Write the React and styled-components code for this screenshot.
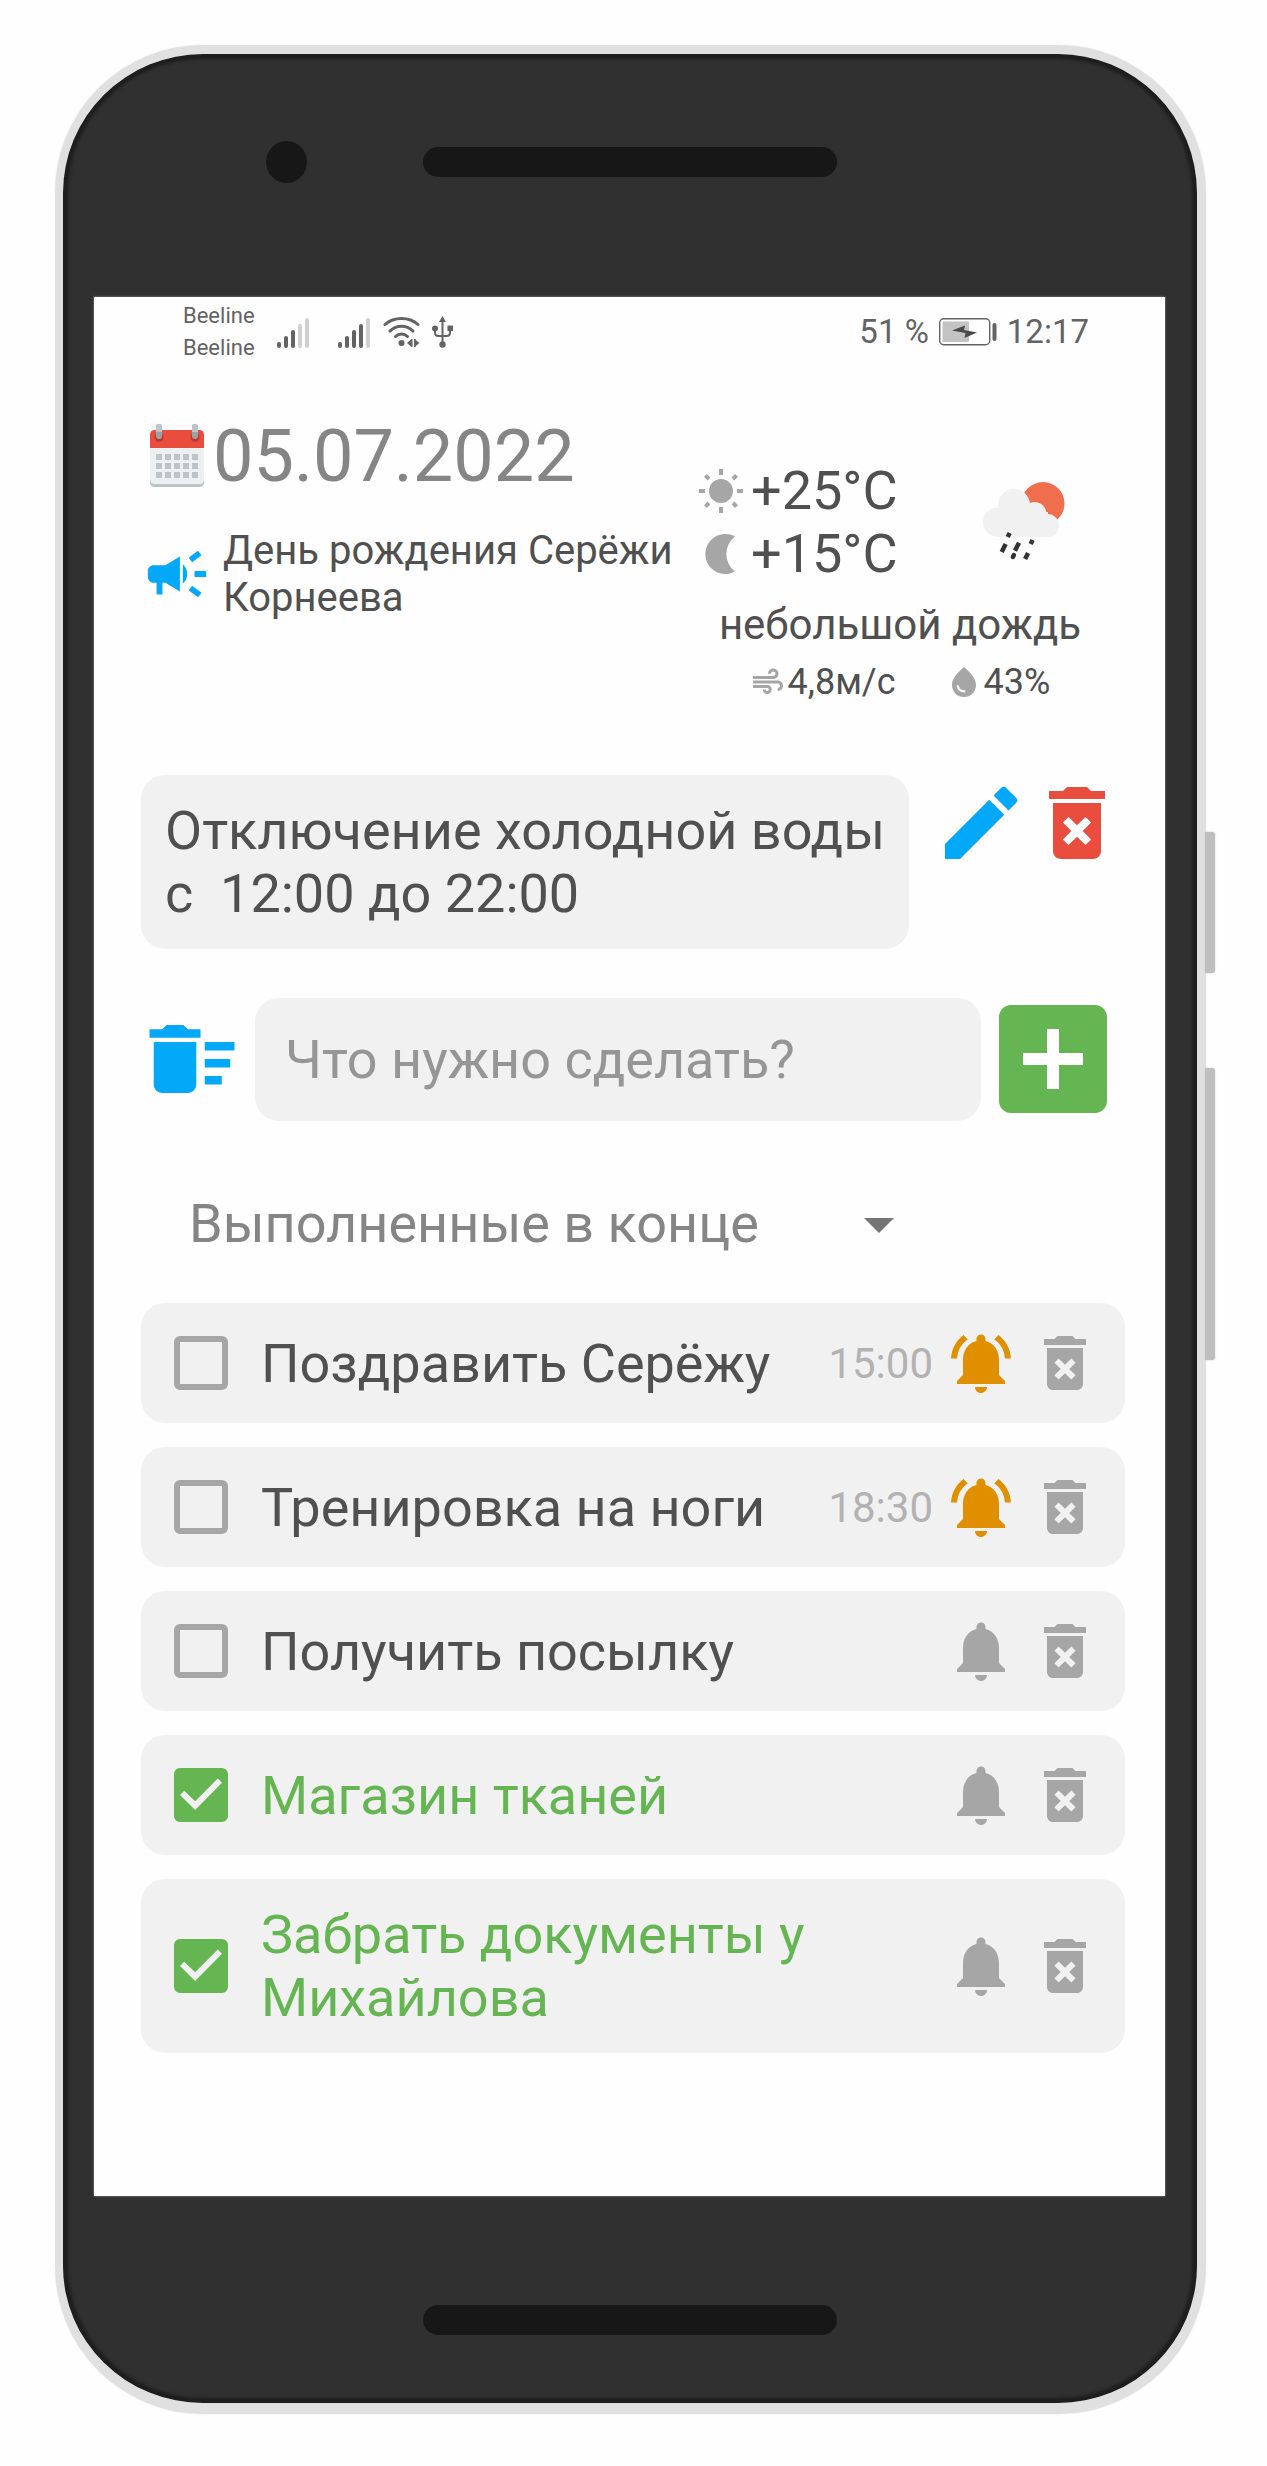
import React, { useState } from "react";
import styled, { createGlobalStyle } from "styled-components";
import {
  MdAddBox,
  MdAir,
  MdArrowDropDown,
  MdCampaign,
  MdDeleteForever,
  MdDeleteSweep,
  MdEdit,
  MdNotifications,
  MdNotificationsActive,
  MdWaterDrop,
} from "react-icons/md";

const color = {
  text: "#505050",
  muted: "#858585",
  hint: "#969696",
  time: "#b2b2b2",
  icon: "#a6a6a6",
  status: "#636363",
  card: "#f1f1f1",
  blue: "#03a9f8",
  red: "#e94d3d",
  green: "#66b553",
  amber: "#e08f00",
};

const GlobalStyle = createGlobalStyle`
  *, *::before, *::after { box-sizing: border-box; }
  body {
    margin: 0;
    background: #fefefe;
    color: ${color.text};
    font-family: Roboto, "Noto Sans", sans-serif;
  }
  button, input, select { font: inherit; color: inherit; }
  svg { display: block; flex: none; }
`;

/* ---------- device frame ---------- */

const Page = styled.div`
  padding: 45px 61px 51px 55px;
`;

const Phone = styled.div`
  position: relative;
  border: solid #e0e0e0;
  border-width: 9px 9px 11px 8px;
  border-radius: 148px;
  background: #303030;
  box-shadow: inset 0 0 3px 5px #1e1e1e, inset 0 0 2px 1px #1e1e1e, 0 0 2px #e8e8e8;
`;

const SideKey = styled.span`
  position: absolute;
  left: calc(100% + 8px);
  top: ${(p) => p.$top}px;
  width: 10px;
  height: ${(p) => p.$height}px;
  border-radius: 0 3px 3px 0;
  background: #bebebe;
  box-shadow: 0 0 2px #cfcfcf;
`;

const Bezel = styled.div`
  display: grid;
  grid-template-columns: 1fr 414px 1fr;
  align-items: center;
  padding: ${(p) => p.$padding};
`;

const Camera = styled.span`
  justify-self: end;
  width: 41px;
  height: 42px;
  margin-right: 116px;
  border-radius: 50%;
  background: #171717;
`;

const Speaker = styled.span`
  grid-column: 2;
  height: 30px;
  border-radius: 15px;
  background: #171717;
`;

const Screen = styled.div`
  margin: 0 32px 0 31px;
  background: #fefefe;
  box-shadow: 0 0 2px #9a9a9a;
`;

/* ---------- status bar ---------- */

const StatusBar = styled.div`
  display: flex;
  align-items: center;
  justify-content: space-between;
  padding: 3px 76px 0 89px;
  color: ${color.status};
`;

const StatusGroup = styled.div`
  display: flex;
  align-items: center;
  gap: ${(p) => p.$gap}px;
`;

const Carriers = styled.div`
  margin-right: 10px;
  font-size: 22px;
  line-height: 32px;
`;

const Signals = styled.div`
  display: flex;
  gap: 28px;
`;

const StatusText = styled.span`
  font-size: 33px;
  line-height: 42px;
`;

/* ---------- content ---------- */

const Content = styled.main`
  padding: 51px 40px 143px 47px;
`;

const Header = styled.header`
  display: flex;
  justify-content: space-between;
  padding-right: 18px;
  margin-bottom: 72px;
`;

const Today = styled.section`
  flex: 1;
  display: flex;
  flex-direction: column;
  gap: 28px;
`;

const TodayRow = styled.div`
  display: flex;
  align-items: center;
  gap: ${(p) => p.$gap}px;
`;

const IconSlot = styled.span`
  flex: none;
  display: flex;
  justify-content: center;
  width: 72px;
`;

const DateText = styled.h1`
  margin: 0;
  color: ${color.muted};
  font-size: 72px;
  font-weight: 400;
  line-height: 84px;
`;

const EventText = styled.p`
  margin: 0;
  font-size: 40px;
  line-height: 47px;
`;

const Weather = styled.section`
  flex: none;
  width: 414px;
  padding-top: 44px;
`;

const WeatherMain = styled.div`
  display: flex;
  align-items: center;
  justify-content: space-between;
  padding-right: 42px;
`;

const Temperature = styled.div`
  display: flex;
  align-items: center;
  gap: 2px;
  font-size: 54px;
  line-height: 63px;
`;

const Description = styled.p`
  margin: 15px 0 12px;
  text-align: center;
  font-size: 42px;
  line-height: 49px;
`;

const Readings = styled.div`
  display: flex;
  justify-content: center;
  gap: 50px;
`;

const Reading = styled.span`
  display: flex;
  align-items: center;
  gap: 2px;
  font-size: 36px;
  line-height: 42px;

  svg { color: ${color.icon}; }
`;

const NoteRow = styled.section`
  display: flex;
  align-items: flex-start;
  gap: 24px;
  margin-bottom: 38px;
`;

const Note = styled.p`
  flex: 1;
  margin: 0;
  padding: 24px 12px 24px 24px;
  border-radius: 24px;
  background: ${color.card};
  font-size: 54px;
  line-height: 63px;
  white-space: pre-wrap;
`;

const Actions = styled.div`
  flex: none;
  display: flex;
  gap: ${(p) => p.$gap || 0}px;
`;

const IconButton = styled.button`
  flex: none;
  padding: 0;
  border: 0;
  background: none;
  color: ${(p) => p.$color};
  cursor: pointer;
`;

const AddForm = styled.form`
  display: flex;
  align-items: center;
  margin-bottom: 60px;
`;

const TaskInput = styled.input`
  flex: 1;
  min-width: 0;
  height: 123px;
  margin-left: 12px;
  padding: 0 30px;
  border: 0;
  border-radius: 24px;
  background: ${color.card};
  font-size: 54px;
  line-height: 63px;

  &::placeholder { color: ${color.hint}; opacity: 1; }
`;

const SortField = styled.div`
  position: relative;
  max-width: 774px;
  margin-bottom: 48px;
  color: ${color.muted};

  svg {
    position: absolute;
    top: -3px;
    right: 0;
    color: #757575;
    pointer-events: none;
  }
`;

const SortSelect = styled.select`
  display: block;
  width: 100%;
  height: 64px;
  padding: 0 72px 0 48px;
  border: 0;
  appearance: none;
  background: transparent;
  font-size: 54px;
  line-height: 63px;
`;

const TaskList = styled.ul`
  display: flex;
  flex-direction: column;
  gap: 24px;
  margin: 0;
  padding: 0;
  list-style: none;
`;

const TaskItem = styled.li`
  display: flex;
  align-items: center;
  gap: 12px;
  min-height: 120px;
  padding: 24px;
  border-radius: 24px;
  background: ${color.card};
`;

const TaskLabel = styled.label`
  flex: 1;
  display: flex;
  align-items: center;
  gap: 33px;
  padding-left: 9px;
  color: ${(p) => (p.$done ? color.green : color.text)};
  font-size: 54px;
  line-height: 63px;
`;

const Checkbox = styled.input`
  flex: none;
  width: 54px;
  height: 54px;
  margin: 0;
  border: 6px solid ${color.icon};
  border-radius: 6px;
  appearance: none;

  &:checked {
    border-color: ${color.green};
    background: ${color.green};
  }

  &:checked::before {
    content: "";
    display: block;
    width: 42px;
    height: 42px;
    background: ${color.card};
    clip-path: polygon(0 50%, 10% 40%, 36% 65%, 90% 11%, 100% 21%, 36% 86%);
  }
`;

const TaskTime = styled.time`
  color: ${color.time};
  font-size: 42px;
  line-height: 49px;
`;

/* ---------- drawings ---------- */

function SignalIcon({ level }) {
  const bars = [6, 12, 18, 24, 30];
  return (
    <svg width="33" height="31" viewBox="0 0 33 31" aria-hidden="true">
      {bars.map((h, i) => (
        <rect
          key={h}
          x={i * 7}
          y={31 - h}
          width="4"
          height={h}
          rx="2"
          fill={i < level ? color.status : "#d0d0d0"}
        />
      ))}
    </svg>
  );
}

function WifiIcon() {
  return (
    <svg width="37" height="32" viewBox="0 0 37 32" fill="none" stroke={color.status} strokeWidth="3" strokeLinecap="round" aria-hidden="true">
      <path d="M2 8.5C11 0.5 26 0.5 35 8.5" />
      <path d="M7 15C13.5 8.5 23.5 8.5 30 15" />
      <path d="M12.5 20.5C16 17 21 17 24.5 20.5" />
      <circle cx="18.5" cy="27" r="3" fill={color.status} stroke="none" />
      <path d="M24 27l4.500-4v8zM36.500 27l-5-4v8z" fill={color.status} stroke="none" />
      <path d="M28.800 23v8M31.800 23v8" strokeWidth="1.500" strokeLinecap="butt" />
    </svg>
  );
}

function UsbIcon() {
  return (
    <svg width="21" height="32" viewBox="0 0 21 32" fill={color.status} aria-hidden="true">
      <path d="M10.500 0L14 6H7z" />
      <circle cx="10.500" cy="28.500" r="3.200" />
      <circle cx="3" cy="12.500" r="3" />
      <rect x="15.500" y="9.500" width="5.500" height="5.500" />
      <path d="M10.500 4V27M3 12V16.500Q3 20 6.500 20H14.500Q18 20 18 16.500V13" fill="none" stroke={color.status} strokeWidth="2" />
    </svg>
  );
}

function BatteryIcon() {
  return (
    <svg width="58" height="28" viewBox="0 0 58 28" aria-hidden="true">
      <rect x="0.700" y="0.700" width="50" height="26" rx="4" fill="none" stroke={color.status} strokeWidth="1.400" />
      <rect x="3.500" y="3.500" width="26.500" height="20.500" rx="1" fill="#c3c3c3" />
      <path d="M13 12.500L26 7.500L25 12L38 14.500L25.500 20L26.500 15z" fill="#4a4a4a" />
      <rect x="53.500" y="5" width="4" height="18" rx="2" fill={color.status} />
    </svg>
  );
}

function CalendarIcon() {
  const columns = [6, 15, 24, 33, 42];
  const rows = [30, 39, 48];
  return (
    <svg width="54" height="66" viewBox="0 0 54 66" aria-hidden="true">
      <path d="M0 24H54V58Q54 63 49 63H5Q0 63 0 58z" fill="#bdc3c7" />
      <path d="M0 24H54V55Q54 60 49 60H5Q0 60 0 55z" fill="#ecf0f1" />
      <path d="M5 6H49Q54 6 54 11V24H0V11Q0 6 5 6z" fill={color.red} />
      {[9, 45].map((x) => (
        <g key={x}>
          <circle cx={x} cy="13.500" r="4.500" fill="#c0392b" />
          <rect x={x - 3} y="0" width="6" height="15" rx="3" fill="#95a5a5" />
          <path d={`M${x - 3} 8V3a3 3 0 0 1 6 0V8z`} fill="#bdc3c7" />
        </g>
      ))}
      {rows.map((y) =>
        columns.map((x) => <rect key={`${x}-${y}`} x={x} y={y} width="6" height="6" fill="#bdc3c7" />)
      )}
    </svg>
  );
}

function SunIcon() {
  return (
    <svg width="56" height="44" viewBox="-28 -22 56 44" fill={color.icon} aria-hidden="true">
      <circle r="12" />
      {[0, 90, 180, 270].map((a) => (
        <rect key={a} x="-2" y="-22" width="4" height="6" transform={`rotate(${a})`} />
      ))}
      {[45, 135, 225, 315].map((a) => (
        <rect key={a} x="-2" y="-22" width="4" height="5" transform={`rotate(${a})`} />
      ))}
    </svg>
  );
}

function MoonIcon() {
  return (
    <svg width="56" height="40" viewBox="0 0 56 40" fill={color.icon} aria-hidden="true">
      <path d="M42 2.500A20 20 0 1 0 42 37.500A22 22 0 0 1 42 2.500z" />
    </svg>
  );
}

function RainIcon() {
  const drops = [
    [25.7, 53, 2],
    [20.7, 66, 4],
    [34, 64.7, 4],
    [48.6, 60, 2],
    [30.4, 74, 1],
    [43.6, 74, 3],
  ];
  return (
    <svg width="82" height="80" viewBox="0 0 82 80" aria-label="дождь" role="img">
      <circle cx="60" cy="21.500" r="21.500" fill="#ef6e4d" />
      <g fill="#f1f1f1">
        <circle cx="14.500" cy="40" r="14.500" />
        <circle cx="31" cy="23" r="16" />
        <circle cx="51.500" cy="32" r="12" />
        <circle cx="64.500" cy="43.500" r="11.500" />
        <rect x="14" y="30" width="51" height="25" />
      </g>
      <g stroke="#333" strokeWidth="4.500">
        {drops.map(([x, y, l]) => (
          <line key={`${x}`} x1={x - l / 2} y1={y + l} x2={x + l / 2} y2={y - l} strokeLinecap={l === 1 ? "round" : "butt"} />
        ))}
      </g>
    </svg>
  );
}

/* ---------- app ---------- */

const initialTasks = [
  { id: 1, title: "Поздравить Серёжу", time: "15:00", done: false },
  { id: 2, title: "Тренировка на ноги", time: "18:30", done: false },
  { id: 3, title: "Получить посылку", done: false },
  { id: 4, title: "Магазин тканей", done: true },
  { id: 5, title: "Забрать документы у Михайлова", done: true },
];

function Task({ task, onToggle, onDelete }) {
  const Bell = task.time ? MdNotificationsActive : MdNotifications;
  return (
    <TaskItem>
      <TaskLabel $done={task.done}>
        <Checkbox type="checkbox" checked={task.done} onChange={onToggle} />
        <span>{task.title}</span>
      </TaskLabel>
      {task.time && <TaskTime>{task.time}</TaskTime>}
      <Actions $gap={12}>
        <IconButton type="button" aria-label="Напоминание" $color={task.time ? color.amber : color.icon}>
          <Bell size={72} />
        </IconButton>
        <IconButton type="button" aria-label="Удалить" $color={color.icon} onClick={onDelete}>
          <MdDeleteForever size={72} />
        </IconButton>
      </Actions>
    </TaskItem>
  );
}

export default function App() {
  const [tasks, setTasks] = useState(initialTasks);
  const [draft, setDraft] = useState("");

  const toggle = (id) => setTasks(tasks.map((t) => (t.id === id ? { ...t, done: !t.done } : t)));
  const remove = (id) => setTasks(tasks.filter((t) => t.id !== id));
  const add = (e) => {
    e.preventDefault();
    if (!draft.trim()) return;
    setTasks([{ id: Date.now(), title: draft.trim(), done: false }, ...tasks]);
    setDraft("");
  };

  return (
    <Page>
      <GlobalStyle />
      <Phone>
        <SideKey $top={778} $height={141} />
        <SideKey $top={1014} $height={292} />
        <Bezel $padding="87px 0 114px">
          <Camera />
          <Speaker />
        </Bezel>
        <Screen>
          <StatusBar>
            <StatusGroup $gap={12}>
              <Carriers>
                <div>Beeline</div>
                <div>Beeline</div>
              </Carriers>
              <Signals>
                <SignalIcon level={3} />
                <SignalIcon level={4} />
              </Signals>
              <WifiIcon />
              <UsbIcon />
            </StatusGroup>
            <StatusGroup $gap={10}>
              <StatusText>51 %</StatusText>
              <BatteryIcon />
              <StatusText>12:17</StatusText>
            </StatusGroup>
          </StatusBar>

          <Content>
            <Header>
              <Today>
                <TodayRow $gap={0}>
                  <IconSlot>
                    <CalendarIcon />
                  </IconSlot>
                  <DateText>05.07.2022</DateText>
                </TodayRow>
                <TodayRow $gap={10}>
                  <IconSlot>
                    <MdCampaign size={70} color={color.blue} />
                  </IconSlot>
                  <EventText>День рождения Серёжи Корнеева</EventText>
                </TodayRow>
              </Today>
              <Weather>
                <WeatherMain>
                  <div>
                    <Temperature>
                      <SunIcon />
                      +25°C
                    </Temperature>
                    <Temperature>
                      <MoonIcon />
                      +15°C
                    </Temperature>
                  </div>
                  <RainIcon />
                </WeatherMain>
                <Description>небольшой дождь</Description>
                <Readings>
                  <Reading>
                    <MdAir size={36} />
                    4,8м/с
                  </Reading>
                  <Reading>
                    <MdWaterDrop size={36} />
                    43%
                  </Reading>
                </Readings>
              </Weather>
            </Header>

            <NoteRow>
              <Note>Отключение холодной воды с{"  "}12:00 до 22:00</Note>
              <Actions>
                <IconButton type="button" aria-label="Изменить заметку" $color={color.blue}>
                  <MdEdit size={96} />
                </IconButton>
                <IconButton type="button" aria-label="Удалить заметку" $color={color.red}>
                  <MdDeleteForever size={96} />
                </IconButton>
              </Actions>
            </NoteRow>

            <AddForm onSubmit={add}>
              <IconButton
                type="button"
                aria-label="Удалить выполненные"
                $color={color.blue}
                onClick={() => setTasks(tasks.filter((t) => !t.done))}
              >
                <MdDeleteSweep size={102} />
              </IconButton>
              <TaskInput
                type="text"
                aria-label="Новая задача"
                placeholder="Что нужно сделать?"
                value={draft}
                onChange={(e) => setDraft(e.target.value)}
              />
              <IconButton type="submit" aria-label="Добавить" $color={color.green}>
                <MdAddBox size={144} />
              </IconButton>
            </AddForm>

            <SortField>
              <SortSelect aria-label="Порядок задач" defaultValue="done-last">
                <option value="done-last">Выполненные в конце</option>
              </SortSelect>
              <MdArrowDropDown size={72} />
            </SortField>

            <TaskList>
              {tasks.map((t) => (
                <Task key={t.id} task={t} onToggle={() => toggle(t.id)} onDelete={() => remove(t.id)} />
              ))}
            </TaskList>
          </Content>
        </Screen>
        <Bezel $padding="109px 0 68px">
          <Speaker />
        </Bezel>
      </Phone>
    </Page>
  );
}
